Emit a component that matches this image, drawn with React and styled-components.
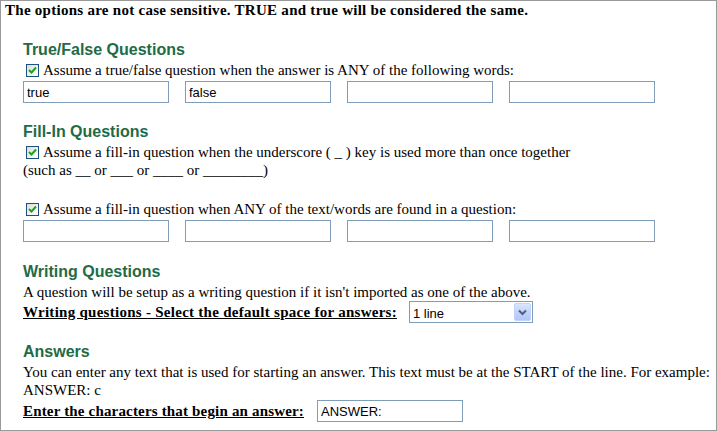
import styled, { createGlobalStyle } from "styled-components";

const Global = createGlobalStyle`
  html, body { margin: 0; padding: 0; background: #fff; }
  body { font-family: "Liberation Serif", "Times New Roman", serif; color: #000; }
`;

const Frame = styled.div`
  box-sizing: border-box;
  width: 717px;
  height: 431px;
  border: 1px solid #9a9a9a;
  overflow: hidden;
  padding: 0 0 0 4px;
  font-size: 15px;
  line-height: 18px;
`;

const Intro = styled.div`
  font-weight: bold;
  letter-spacing: 0.27px;
  white-space: nowrap;
`;

const Section = styled.section`
  margin-top: ${({ $top }) => $top || 20}px;
  padding-left: 18px;
`;

const Heading = styled.h3`
  margin: 0 0 2px;
  font-family: "Liberation Sans", Arial, sans-serif;
  font-size: 16px;
  line-height: 19px;
  font-weight: bold;
  color: #216b47;
`;

const Line = styled.div`
  white-space: nowrap;
  margin-top: ${({ $top }) => $top || 0}px;
`;

const CheckRow = styled.label`
  display: flex;
  align-items: center;
  height: 18px;
  white-space: nowrap;
  margin-top: ${({ $top }) => $top || 0}px;
`;

const Box = styled.span`
  box-sizing: border-box;
  width: 13px;
  height: 13px;
  margin: 0 4px 0 3px;
  border: 1px solid #1c5180;
  background: linear-gradient(135deg, #dcdcd7 0%, #fbfbf9 80%, #fff 100%);
  display: flex;
  align-items: center;
  justify-content: center;
`;

const Fields = styled.div`
  display: flex;
  gap: 16px;
  margin-top: 2px;
`;

const Field = styled.input`
  box-sizing: border-box;
  width: ${({ $w }) => $w || 146}px;
  height: 22px;
  border: 1px solid #7f9db9;
  padding: 1px 3px 0;
  margin: 0;
  font-family: "Liberation Sans", Arial, sans-serif;
  font-size: 13px;
  color: #000;
  background: #fff;
  outline: none;
`;

const LabelRow = styled.div`
  display: flex;
  align-items: center;
  gap: ${({ $gap }) => $gap || 12}px;
  height: ${({ $h }) => $h || 22}px;
`;

const Strong = styled.span`
  font-weight: bold;
  letter-spacing: ${({ $ls }) => $ls || 0.27}px;
  text-decoration: underline;
  white-space: nowrap;
`;

const Select = styled.div`
  box-sizing: border-box;
  width: 124px;
  height: 22px;
  border: 1px solid #7f9db9;
  display: flex;
  align-items: stretch;
  padding: 1px;
  font-family: "Liberation Sans", Arial, sans-serif;
  font-size: 13px;
`;

const SelectText = styled.span`
  flex: 1;
  padding: 2px 0 0 2px;
`;

const SelectButton = styled.span`
  box-sizing: border-box;
  width: 17px;
  border: 1px solid #c3d3fd;
  border-radius: 2px;
  background: linear-gradient(180deg, #dbe5fe 0%, #c1d3fb 50%, #b3c6f5 100%);
  display: flex;
  align-items: center;
  justify-content: center;
`;

function Check() {
  return (
    <Box>
      <svg width="9" height="9" viewBox="0 0 9 9">
        <path d="M1 4 L3.5 6.5 L8 1.5" fill="none" stroke="#21a121" strokeWidth="2" />
      </svg>
    </Box>
  );
}

export default function App() {
  return (
    <>
      <Global />
      <Frame>
        <Intro>The options are not case sensitive. TRUE and true will be considered the same.</Intro>

        <Section $top={21}>
          <Heading>True/False Questions</Heading>
          <CheckRow>
            <Check />
            Assume a true/false question when the answer is ANY of the following words:
          </CheckRow>
          <Fields>
            <Field defaultValue="true" />
            <Field defaultValue="false" />
            <Field />
            <Field />
          </Fields>
        </Section>

        <Section $top={19}>
          <Heading>Fill-In Questions</Heading>
          <CheckRow $top={1}>
            <Check />
            Assume a fill-in question when the underscore ( _ ) key is used more than once together
          </CheckRow>
          <Line>(such as __ or ___ or ____ or ________)</Line>
          <CheckRow $top={21}>
            <Check />
            Assume a fill-in question when ANY of the text/words are found in a question:
          </CheckRow>
          <Fields>
            <Field />
            <Field />
            <Field />
            <Field />
          </Fields>
        </Section>

        <Section $top={20}>
          <Heading>Writing Questions</Heading>
          <Line $top={1}>A question will be setup as a writing question if it isn't imported as one of the above.</Line>
          <LabelRow>
            <Strong>Writing questions - Select the default space for answers:</Strong>
            <Select>
              <SelectText>1 line</SelectText>
              <SelectButton>
                <svg width="9" height="7" viewBox="0 0 9 7">
                  <path d="M1 1.5 L4.5 5 L8 1.5" fill="none" stroke="#4d6185" strokeWidth="2" />
                </svg>
              </SelectButton>
            </Select>
          </LabelRow>
        </Section>

        <Section $top={19}>
          <Heading>Answers</Heading>
          <Line $top={1}>
            You can enter any text that is used for starting an answer. This text must be at the START of the line. For example:
          </Line>
          <Line>ANSWER: c</Line>
          <LabelRow $gap={13} $h={23}>
            <Strong $ls={0.17}>Enter the characters that begin an answer:</Strong>
            <Field $w={146} defaultValue="ANSWER:" />
          </LabelRow>
        </Section>
      </Frame>
    </>
  );
}
